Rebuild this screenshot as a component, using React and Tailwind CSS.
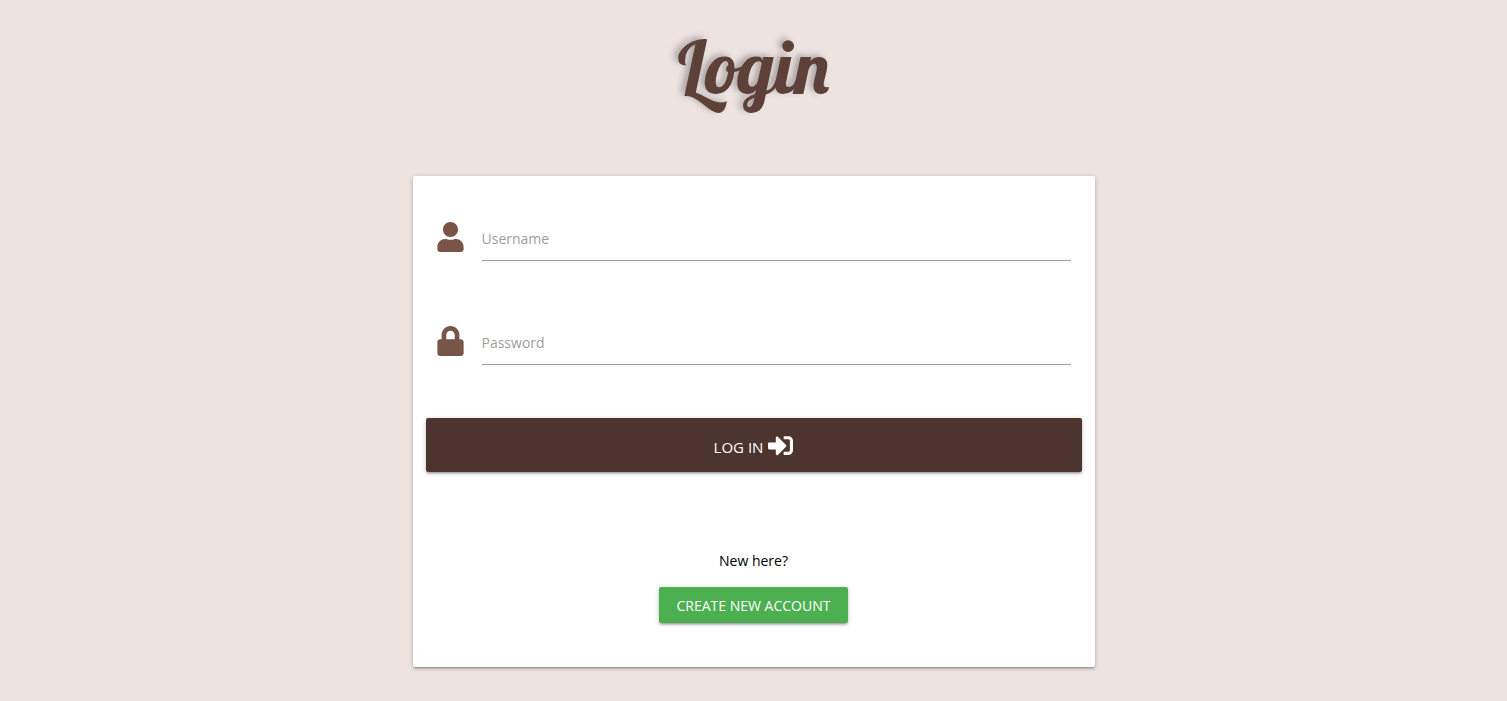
import { FaUser, FaLock, FaSignInAlt } from "react-icons/fa";

const raised =
  "shadow-[0_2px_2px_0_rgba(0,0,0,0.14),0_3px_1px_-2px_rgba(0,0,0,0.12),0_1px_5px_0_rgba(0,0,0,0.2)]";

function Field({ id, type, label, icon: Icon, autoComplete }) {
  return (
    <div className="flex items-start gap-[18px] px-[11px]">
      <Icon className="mt-1 h-[30px] w-[27px] shrink-0 text-[#795548]" aria-hidden="true" />
      <div className="relative grow">
        <input
          id={id}
          name={id}
          type={type}
          placeholder=" "
          autoComplete={autoComplete}
          className="peer block h-[43px] w-full border-b border-[#9e9e9e] bg-transparent text-[15px] text-black outline-none focus:border-[#795548]"
        />
        <label
          htmlFor={id}
          className="pointer-events-none absolute left-0 top-0 -translate-y-3 text-xs text-[#9e9e9e] peer-placeholder-shown:translate-y-0 peer-placeholder-shown:text-[14px] peer-placeholder-shown:leading-[42px]"
        >
          {label}
        </label>
      </div>
    </div>
  );
}

export default function App() {
  return (
    <main className="flex min-h-screen flex-col items-center bg-[#ede4e2] px-4 pb-8 font-['Segoe_UI','Open_Sans',sans-serif] text-black">
      <h1 className="pt-[25px] font-['Lobster',cursive] text-[74px] font-normal leading-[84px] text-[#5d4037] [text-shadow:-4px_-2px_6px_#aaa5a3]">
        Login
      </h1>

      <section className={`mt-[67px] w-full max-w-[682px] rounded-xs bg-white px-[13px] pb-11 pt-[42px] ${raised}`}>
        <form onSubmit={(e) => e.preventDefault()}>
          <div className="flex flex-col gap-[61px]">
            <Field id="username" type="text" label="Username" icon={FaUser} autoComplete="username" />
            <Field id="password" type="password" label="Password" icon={FaLock} autoComplete="current-password" />
          </div>
          <button
            type="submit"
            className={`mt-[53px] flex h-[54px] w-full cursor-pointer items-center justify-center gap-[5px] rounded-xs bg-[#4e342e] text-[15px] uppercase text-white ${raised}`}
          >
            <span className="pt-[5px]">Log in</span>
            <FaSignInAlt className="size-[25px]" aria-hidden="true" />
          </button>
        </form>

        <div className="mt-[77px] flex flex-col items-center gap-[15px]">
          <p className="text-[14px] leading-[23px]">New here?</p>
          <a
            href="#register"
            className={`flex h-9 items-center rounded-xs bg-[#4caf50] px-[18px] text-[14px] uppercase text-white ${raised}`}
          >
            Create new account
          </a>
        </div>
      </section>
    </main>
  );
}
